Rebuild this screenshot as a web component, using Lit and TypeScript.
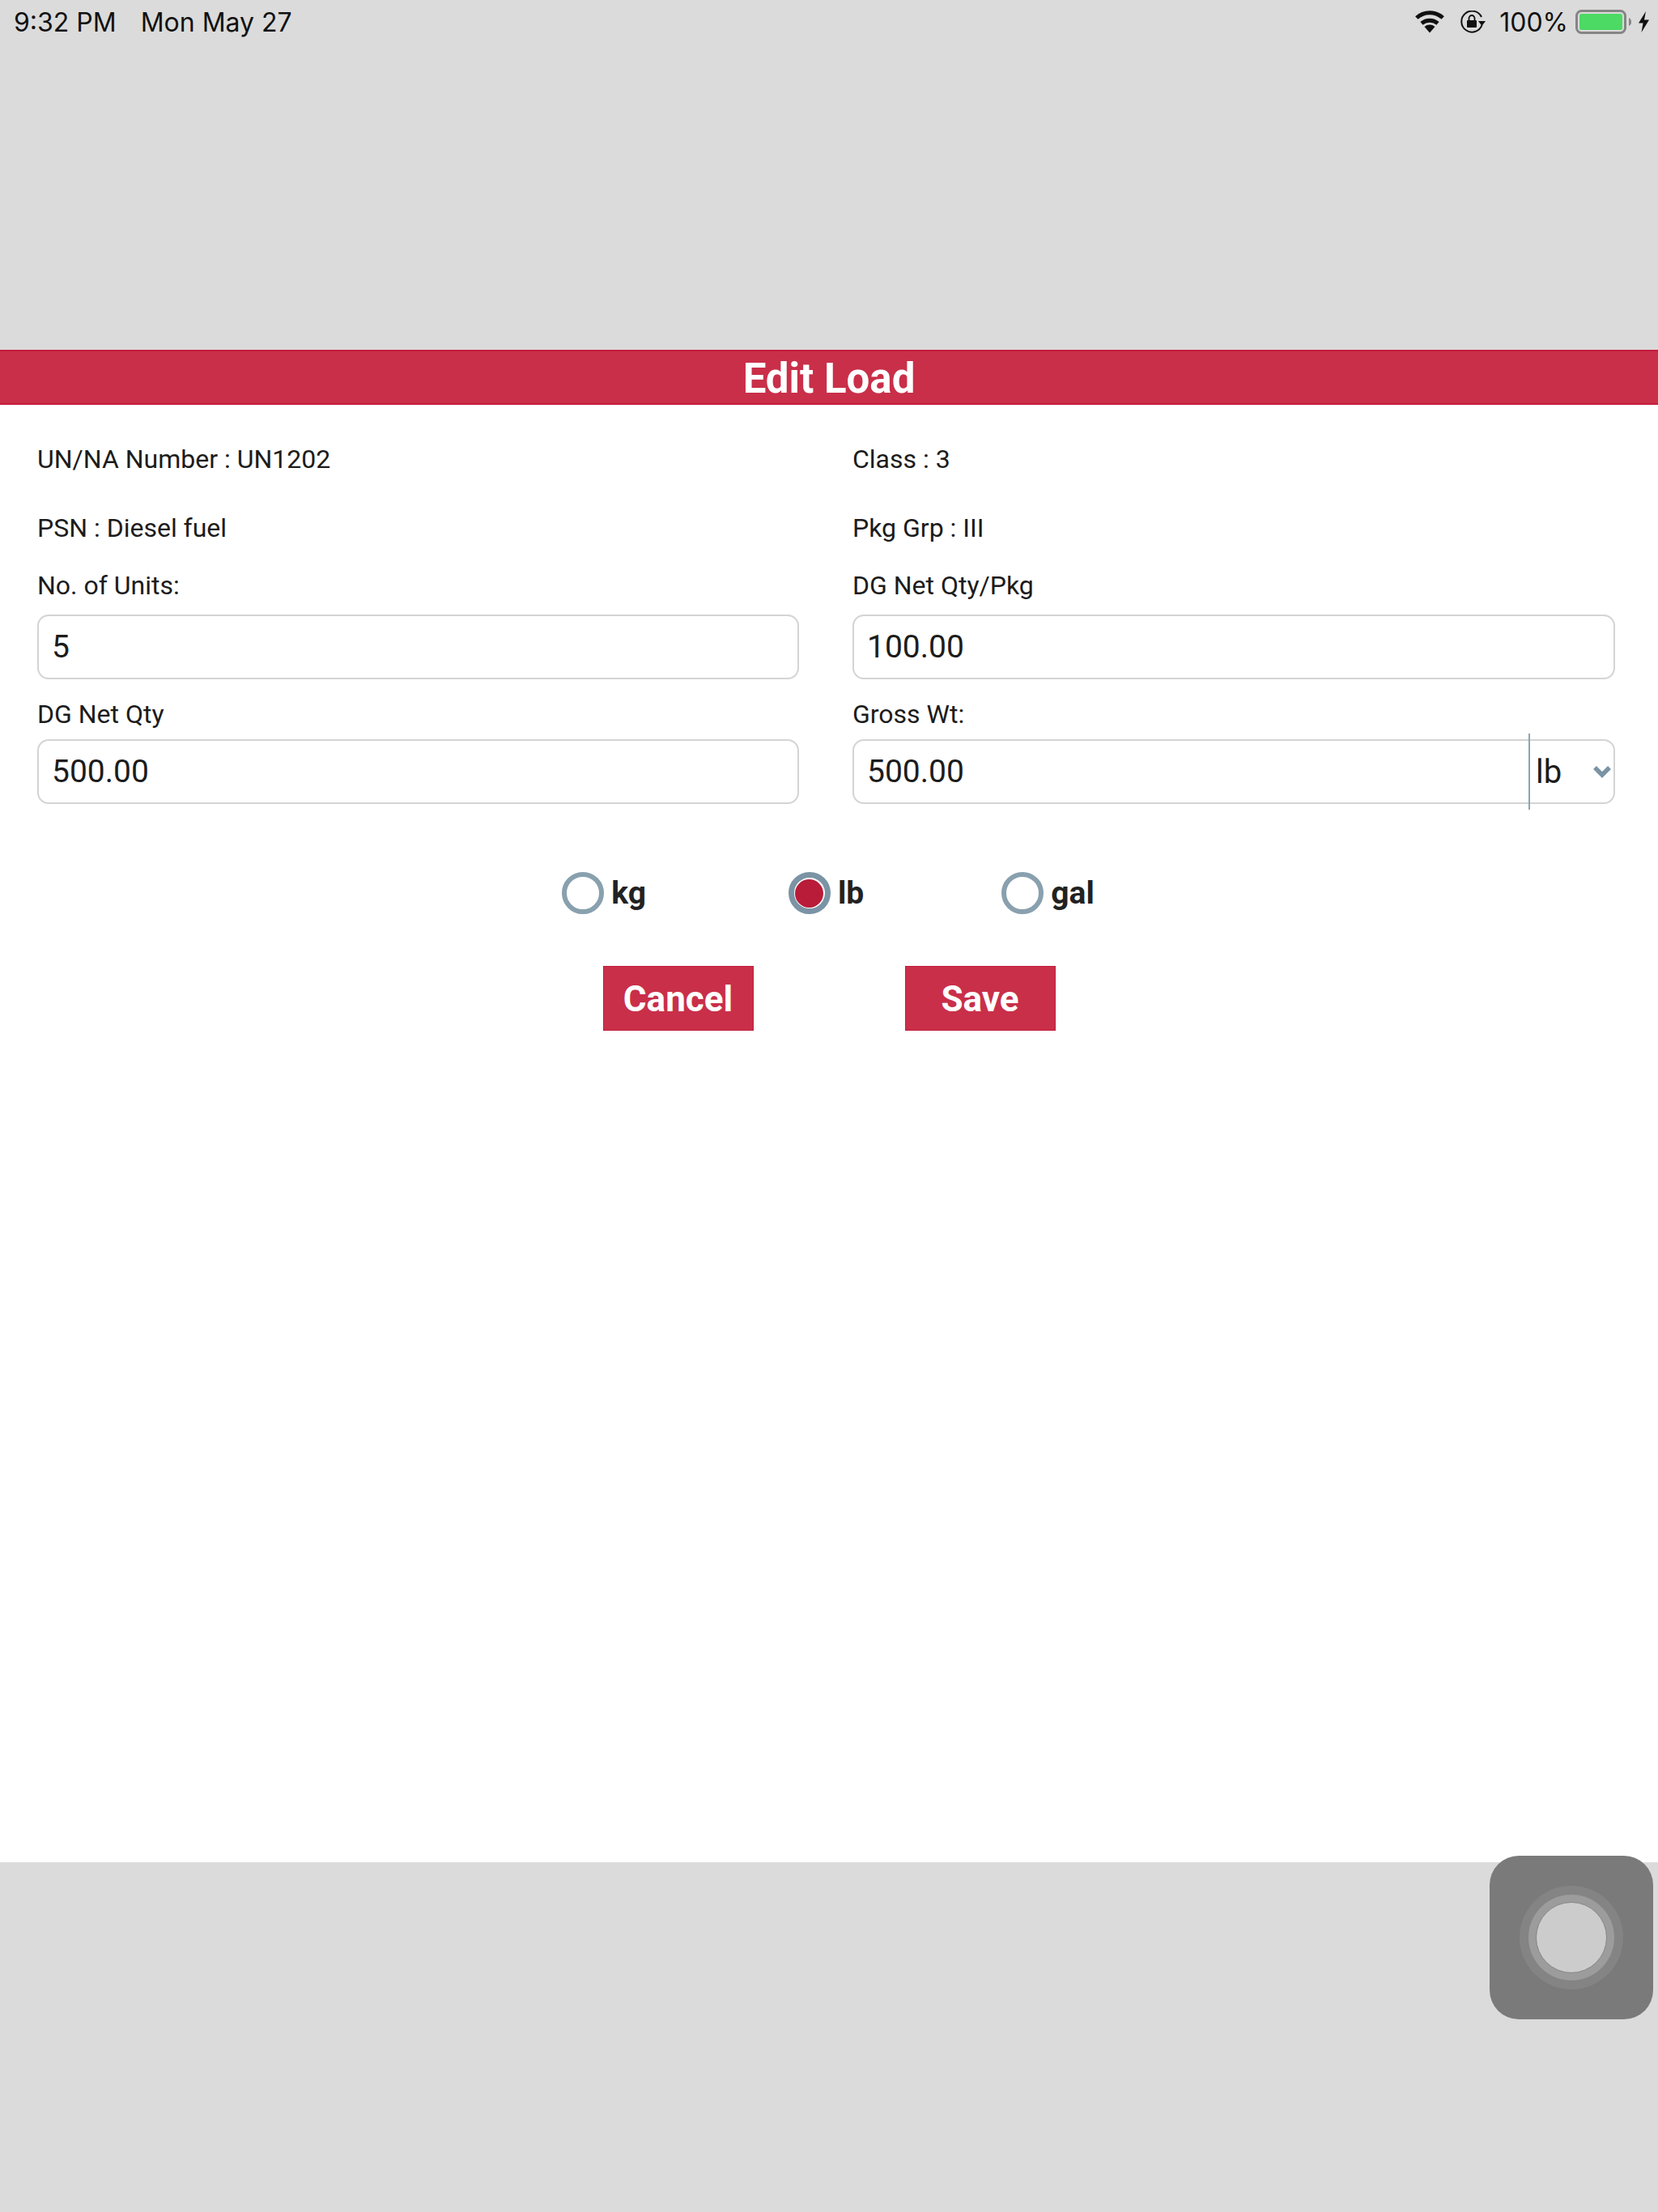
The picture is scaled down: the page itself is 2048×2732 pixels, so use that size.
import { LitElement, html, css } from "lit";
import { customElement } from "lit/decorators.js";

@customElement("app-root")
export class AppRoot extends LitElement {
  static styles = css`
    :host { display: block; width: 2048px; height: 2732px; background: #dbdbdb; font-family: Roboto, sans-serif; color: #1c1c1c; position: relative; overflow: hidden; }
    .status { height: 54px; display: flex; align-items: center; padding: 0 10px 0 17px; font-family: Inter, "Liberation Sans", sans-serif; font-size: 32px; color: #111; }
    .time { margin-right: 30px; }
    .spacer { flex: 1; }
    .wifi { width: 38px; height: 28px; margin-right: 18px; }
    .lock { width: 32px; height: 28px; margin-right: 17px; }
    .pct { margin-right: 9px; }
    .batt { width: 70px; height: 30px; margin-right: 7px; }
    .bolt { width: 15px; height: 26px; }
    .gap { height: 378px; }
    .panel { background: #fff; height: 1868px; }
    .title { height: 68px; box-sizing: border-box; background: #c92f49; border-top: 2px solid #c41c3c; border-bottom: 2px solid #c41c3c; color: #fff; font-weight: 700; font-size: 51px; line-height: 68px; text-align: center; }
    .form { display: grid; grid-template-columns: 941px 942px; column-gap: 66px; padding: 47px 53px 0 46px; font-size: 32px; }
    .info { height: 40px; line-height: 40px; margin-bottom: 45px; }
    .info.second { margin-bottom: 31px; }
    .label { height: 40px; line-height: 40px; margin-bottom: 16px; }
    .label.low { margin-bottom: 11px; }
    .field { height: 80px; box-sizing: border-box; border: 2px solid #d4d4d4; border-radius: 14px; display: flex; align-items: stretch; margin-bottom: 23px; background: #fff; }
    input { flex: 1; min-width: 0; border: 0; outline: 0; background: transparent; padding: 0 0 0 16px; font: 400 39px Roboto, sans-serif; color: #1c1c1c; }
    .sel { width: 105px; box-sizing: border-box; margin: -9px 0 -9px; border-left: 2px solid #8ea4b4; display: flex; align-items: center; justify-content: space-between; padding: 0 2px 0 7px; font-size: 40px; }
    .sel svg { width: 24px; height: 16px; }
    .radios { display: flex; justify-content: center; gap: 170px; margin-top: 61px; padding-right: 2px; }
    .radio { display: flex; align-items: center; gap: 9px; height: 52px; font-weight: 700; font-size: 39px; color: #222; }
    .radio.first { margin-right: 6px; }
    .ring { width: 52px; height: 52px; box-sizing: border-box; border: 6px solid #89a0ae; border-radius: 50%; display: flex; align-items: center; justify-content: center; }
    .ring.on { border-width: 7px; border-color: #7b94a5; }
    .dot { width: 35px; height: 35px; border-radius: 50%; background: #b81c38; }
    .actions { display: flex; justify-content: center; gap: 187px; margin-top: 64px; }
    .btn { width: 186px; height: 80px; box-sizing: border-box; background: #c92f49; border: 1px solid #c41c3c; color: #fff; font: 700 44px/80px Roboto, sans-serif; text-align: center; padding: 0; }
    .touch { position: absolute; left: 1840px; top: 2292px; width: 202px; height: 202px; border-radius: 36px; background: #7a7a7a; display: flex; align-items: center; justify-content: center; }
    .c1 { width: 128px; height: 128px; border-radius: 50%; background: #848484; display: flex; align-items: center; justify-content: center; }
    .c2 { width: 106px; height: 106px; border-radius: 50%; background: #9c9c9c; display: flex; align-items: center; justify-content: center; }
    .c3 { width: 88px; height: 88px; box-sizing: border-box; border-radius: 50%; background: #cccccc; border: 1.5px solid #868686; }
  `;

  render() {
    return html`
      <div class="status">
        <span class="time">9:32 PM</span><span>Mon May 27</span>
        <span class="spacer"></span>
        <svg class="wifi" viewBox="0 0 38 28">
          <path d="M19 27.5 L12.5 20 A10 10 0 0 1 25.5 20 Z" fill="#111"/>
          <path d="M9 15.8 A15.5 15.5 0 0 1 29 15.8" fill="none" stroke="#111" stroke-width="5"/>
          <path d="M2.8 9 A24 24 0 0 1 35.2 9" fill="none" stroke="#111" stroke-width="5"/>
        </svg>
        <svg class="lock" viewBox="0 0 32 28">
          <path d="M27.5 18 A13 13 0 1 1 27 8" fill="none" stroke="#111" stroke-width="2"/>
          <path d="M23 13 H32 L27.5 19 Z" fill="#111"/>
          <rect x="9" y="12" width="12" height="9" rx="1" fill="#111"/>
          <path d="M11.5 12 V9.5 A3.5 3.5 0 0 1 18.5 9.5 V12" fill="none" stroke="#111" stroke-width="1.8"/>
        </svg>
        <span class="pct">100%</span>
        <svg class="batt" viewBox="0 0 70 30">
          <rect x="1.5" y="1.5" width="60" height="27" rx="6" fill="none" stroke="#858585" stroke-width="3"/>
          <rect x="5" y="5" width="53" height="20" rx="2.5" fill="#4cd964"/>
          <path d="M66 10 C68.5 11 69 13 69 15 C69 17 68.5 19 66 20 Z" fill="#858585"/>
        </svg>
        <svg class="bolt" viewBox="0 0 15 26">
          <path d="M10 0 L1 14.5 H6.5 L4.5 26 L14 10.5 H8 Z" fill="#111"/>
        </svg>
      </div>
      <div class="gap"></div>
      <div class="panel">
        <div class="title">Edit Load</div>
        <div class="form">
          <div class="info">UN/NA Number : UN1202</div>
          <div class="info">Class : 3</div>
          <div class="info second">PSN : Diesel fuel</div>
          <div class="info second">Pkg Grp : III</div>
          <div class="label">No. of Units:</div>
          <div class="label">DG Net Qty/Pkg</div>
          <div class="field"><input .value=${"5"} /></div>
          <div class="field"><input .value=${"100.00"} /></div>
          <div class="label low">DG Net Qty</div>
          <div class="label low">Gross Wt:</div>
          <div class="field"><input .value=${"500.00"} /></div>
          <div class="field">
            <input .value=${"500.00"} />
            <div class="sel">
              <span>lb</span>
              <svg viewBox="0 0 24 16"><path d="M3 3 L12 12 L21 3" fill="none" stroke="#7b94a5" stroke-width="5.5"/></svg>
            </div>
          </div>
        </div>
        <div class="radios">
          <div class="radio first"><span class="ring"></span>kg</div>
          <div class="radio"><span class="ring on"><span class="dot"></span></span>lb</div>
          <div class="radio"><span class="ring"></span>gal</div>
        </div>
        <div class="actions">
          <button class="btn">Cancel</button>
          <button class="btn">Save</button>
        </div>
      </div>
      <div class="touch"><div class="c1"><div class="c2"><div class="c3"></div></div></div></div>
    `;
  }
}
